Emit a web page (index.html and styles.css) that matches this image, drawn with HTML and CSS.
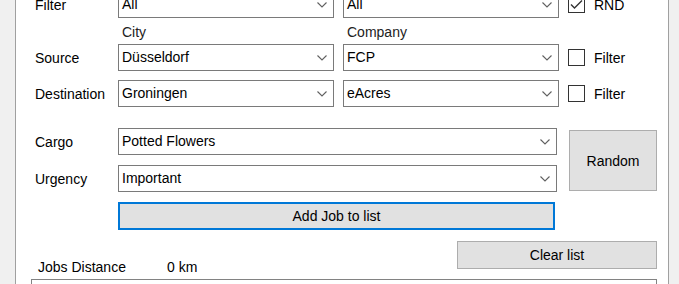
FILE: index.html
```html
<!DOCTYPE html>
<html lang="en">
<head>
    <meta charset="UTF-8">
    <meta name="viewport" content="width=device-width, initial-scale=1.0">
    <title>Job generator</title>
    <link rel="stylesheet" href="styles.css">
</head>
<body>

<div class="panel">
    <!-- filter row -->
    <div class="row first">
        <span class="label">Filter</span>
        <div class="combo">All<svg class="arrow" width="10" height="6" viewBox="0 0 10 6"><path d="M0.5 0.5 L5 5 L9.5 0.5" /></svg></div>
        <div class="combo">All<svg class="arrow" width="10" height="6" viewBox="0 0 10 6"><path d="M0.5 0.5 L5 5 L9.5 0.5" /></svg></div>
        <span class="check checked"><svg width="13" height="11" viewBox="0 0 13 11"><path d="M1 5.5 L4.5 9 L12 1.5" /></svg></span>
        <span class="check-text">RND</span>
    </div>

    <div class="sub-labels">
        <span class="sub">City</span>
        <span class="sub">Company</span>
    </div>

    <div class="row">
        <span class="label">Source</span>
        <div class="combo">Düsseldorf<svg class="arrow" width="10" height="6" viewBox="0 0 10 6"><path d="M0.5 0.5 L5 5 L9.5 0.5" /></svg></div>
        <div class="combo">FCP<svg class="arrow" width="10" height="6" viewBox="0 0 10 6"><path d="M0.5 0.5 L5 5 L9.5 0.5" /></svg></div>
        <span class="check"></span>
        <span class="check-text">Filter</span>
    </div>

    <div class="row">
        <span class="label">Destination</span>
        <div class="combo">Groningen<svg class="arrow" width="10" height="6" viewBox="0 0 10 6"><path d="M0.5 0.5 L5 5 L9.5 0.5" /></svg></div>
        <div class="combo">eAcres<svg class="arrow" width="10" height="6" viewBox="0 0 10 6"><path d="M0.5 0.5 L5 5 L9.5 0.5" /></svg></div>
        <span class="check"></span>
        <span class="check-text">Filter</span>
    </div>

    <div class="cargo-block">
        <div class="cargo-fields">
            <div class="row">
                <span class="label">Cargo</span>
                <div class="combo wide">Potted Flowers<svg class="arrow" width="10" height="6" viewBox="0 0 10 6"><path d="M0.5 0.5 L5 5 L9.5 0.5" /></svg></div>
            </div>
            <div class="row">
                <span class="label">Urgency</span>
                <div class="combo wide">Important<svg class="arrow" width="10" height="6" viewBox="0 0 10 6"><path d="M0.5 0.5 L5 5 L9.5 0.5" /></svg></div>
            </div>
            <button type="button" class="btn add-job">Add Job to list</button>
        </div>
        <button type="button" class="btn random">Random</button>
    </div>

    <div class="totals">
        <span class="dist-label">Jobs Distance</span>
        <span class="dist-value">0 km</span>
        <button type="button" class="btn clear">Clear list</button>
    </div>

    <div class="job-list"></div>
</div>

</body>
</html>
```

FILE: styles.css
```css
body {
    margin: 0;
    background-color: #f0f0f0;
    font-family: "Liberation Sans", Arial, sans-serif;
    font-size: 14px;
    color: #000;
    overflow: hidden;
}
.panel {
    width: 654px;
    height: 300px;
    margin-left: 15px;
    box-sizing: border-box;
    border-left: 1px solid #a0a0a0;
    border-right: 1px solid #a0a0a0;
    background-color: #fff;
}
.row {
    display: flex;
    align-items: center;
    height: 27px;
    margin-bottom: 9px;
}
.row.first {
    margin-top: -9px;
    margin-bottom: 0;
}
.label {
    width: 83px;
    padding-left: 19px;
    flex-shrink: 0;
}
.combo {
    position: relative;
    width: 216px;
    height: 27px;
    box-sizing: border-box;
    border: 1px solid #7a7a7a;
    background-color: #fff;
    padding-left: 3px;
    line-height: 25px;
    margin-right: 9px;
}
.combo.wide {
    width: 439px;
    margin-right: 0;
}
.arrow {
    position: absolute;
    right: 6px;
    top: 10px;
}
.arrow path {
    fill: none;
    stroke: #606060;
    stroke-width: 1.1;
}
.check {
    width: 17px;
    height: 17px;
    box-sizing: border-box;
    border: 1px solid #333;
    background-color: #fff;
    display: flex;
    align-items: center;
    justify-content: center;
}
.check path {
    fill: none;
    stroke: #333;
    stroke-width: 1.4;
}
.check-text {
    margin-left: 9px;
}
.sub-labels {
    display: flex;
    height: 26px;
    padding-top: 6px;
    box-sizing: border-box;
    line-height: 16px;
    color: #222;
}
.sub {
    width: 225px;
}
.sub:first-child {
    margin-left: 106px;
}
.cargo-block {
    display: flex;
    margin-top: 21px;
}
.cargo-fields .row {
    margin-bottom: 10px;
}
.btn {
    font-family: inherit;
    font-size: 14px;
    color: #000;
    background-color: #e1e1e1;
    border: 1px solid #adadad;
    padding: 0;
    cursor: pointer;
}
.add-job {
    width: 437px;
    height: 28px;
    margin-left: 102px;
    border: 2px solid #0078d7;
}
.random {
    width: 88px;
    height: 61px;
    margin-left: 12px;
    margin-top: 2px;
}
.totals {
    display: flex;
    align-items: flex-start;
    margin-top: 11px;
    padding-left: 22px;
    height: 34px;
}
.dist-label {
    margin-top: 18px;
    line-height: 16px;
    width: 129px;
}
.dist-value {
    margin-top: 18px;
    line-height: 16px;
}
.clear {
    width: 200px;
    height: 28px;
    margin-left: auto;
    margin-right: 11px;
}
.job-list {
    margin-top: 4px;
    margin-left: 15px;
    width: 626px;
    height: 40px;
    box-sizing: border-box;
    border: 1px solid #828282;
    background-color: #fff;
}
```
